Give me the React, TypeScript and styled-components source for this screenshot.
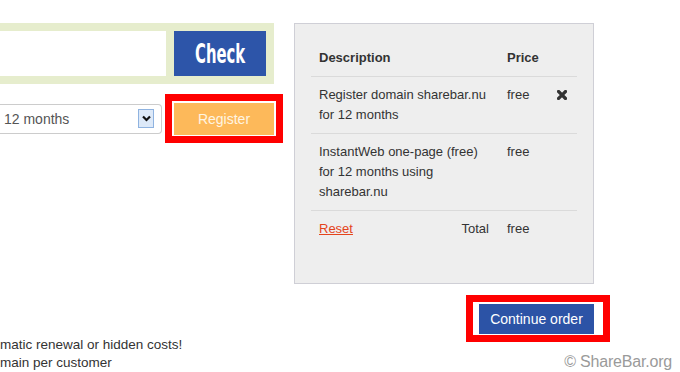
import styled, { createGlobalStyle } from "styled-components";

const GlobalStyle = createGlobalStyle`
  html, body {
    margin: 0;
    padding: 0;
    background: #fff;
  }
  body {
    font-family: "Liberation Sans", Arial, sans-serif;
    font-size: 13px;
    color: #333;
  }
`;

const Page = styled.div`
  position: relative;
  display: flex;
  gap: 20px;
  height: 372px;
  overflow: hidden;
`;

const LeftColumn = styled.div`
  width: 274px;
  flex-shrink: 0;
  display: flex;
  flex-direction: column;
  padding-top: 23px;
  box-sizing: border-box;
`;

const SearchBar = styled.div`
  display: flex;
  gap: 8px;
  height: 61px;
  padding: 8px 8px 8px 0;
  box-sizing: border-box;
  background: #e6edcd;
`;

const DomainInput = styled.input`
  width: 166px;
  height: 45px;
  border: 0;
  outline: none;
  background: #fff;
  padding: 0;
`;

const CheckButton = styled.button`
  width: 92px;
  height: 45px;
  border: 0;
  padding: 0;
  background: #2d55a9;
  color: #fff;
  font-family: "DejaVu Sans Condensed", "Liberation Sans", sans-serif;
  font-weight: bold;
  font-size: 27px;
  cursor: pointer;
`;

const CheckLabel = styled.span`
  display: inline-block;
  transform: scaleX(0.61);
`;

const OrderRow = styled.div`
  display: flex;
  align-items: center;
  gap: 3px;
  margin-top: 10px;
`;

const Select = styled.div`
  width: 162px;
  height: 30px;
  flex-shrink: 0;
  box-sizing: border-box;
  display: flex;
  align-items: center;
  justify-content: space-between;
  padding: 0 7px 0 4px;
  border: 1px solid #ccc;
  border-left: none;
  border-radius: 0 4px 4px 0;
  font-size: 14px;
  color: #555;
`;

const ArrowBox = styled.div`
  width: 16px;
  height: 19px;
  box-sizing: border-box;
  display: flex;
  align-items: center;
  justify-content: center;
  background: #dde9f8;
  border: 1px solid #8fb3e0;
`;

const Highlight = styled.div<{ $pad: string }>`
  display: flex;
  flex-shrink: 0;
  border: 7px solid #ff0000;
  background: #fff;
  padding: ${(p) => p.$pad};
`;

const RegisterButton = styled.button`
  width: 100px;
  height: 32px;
  border: 0;
  padding: 0;
  background: #fdb95a;
  color: #fff5e2;
  font-family: "Liberation Sans", Arial, sans-serif;
  font-size: 14px;
`;

const Notes = styled.div`
  margin-top: auto;
  font-size: 13.5px;
  line-height: 18px;
  color: #333;
`;

const RightColumn = styled.div`
  width: 300px;
  flex-shrink: 0;
  display: flex;
  flex-direction: column;
  padding-top: 23px;
  box-sizing: border-box;
`;

const Panel = styled.div`
  height: 261px;
  box-sizing: border-box;
  padding: 16px;
  background: #eee;
  border: 1px solid #cfcfd6;
`;

const Table = styled.table`
  width: 100%;
  border-collapse: collapse;
  table-layout: fixed;
`;

const Row = styled.tr<{ $last?: boolean }>`
  border-bottom: ${(p) => (p.$last ? "none" : "1px solid #dadada")};
`;

const Head = styled.th`
  padding: 8px;
  line-height: 20px;
  text-align: left;
  font-size: 13px;
  font-weight: bold;
  color: #333;
`;

const Cell = styled.td`
  padding: 8px;
  line-height: 20px;
  vertical-align: top;
  font-size: 13px;
  color: #333;
`;

const TotalLine = styled.div`
  display: flex;
  justify-content: space-between;
  padding-right: 2px;
`;

const ResetLink = styled.a`
  color: #e4441c;
  text-decoration: underline;
  cursor: pointer;
`;

const RemoveIcon = styled.svg`
  display: block;
  margin: 5px auto 0;
`;

const ContinueRow = styled.div`
  display: flex;
  justify-content: flex-end;
  margin-top: 11px;
  margin-right: -16px;
`;

const ContinueButton = styled.button`
  width: 115px;
  height: 30px;
  border: 0;
  padding: 0;
  background: #2c53a6;
  color: #fff;
  font-family: "Liberation Sans", Arial, sans-serif;
  font-size: 14px;
`;

const Watermark = styled.div`
  position: absolute;
  right: 8px;
  bottom: 1px;
  font-size: 16px;
  line-height: 18px;
  letter-spacing: -0.2px;
  color: #9a9a9a;
`;

export default function App() {
  return (
    <Page>
      <GlobalStyle />
      <LeftColumn>
        <SearchBar>
          <DomainInput />
          <CheckButton>
            <CheckLabel>Check</CheckLabel>
          </CheckButton>
        </SearchBar>
        <OrderRow>
          <Select>
            <span>12 months</span>
            <ArrowBox>
              <svg width="9" height="7" viewBox="0 0 9 7">
                <path d="M1 1.5 L4.5 5 L8 1.5" fill="none" stroke="#111" strokeWidth="2.2" />
              </svg>
            </ArrowBox>
          </Select>
          <Highlight $pad="2px 2px 1px 2px">
            <RegisterButton>Register</RegisterButton>
          </Highlight>
        </OrderRow>
        <Notes>
          <div>matic renewal or hidden costs!</div>
          <div>main per customer</div>
        </Notes>
      </LeftColumn>

      <RightColumn>
        <Panel>
          <Table>
            <colgroup>
              <col style={{ width: 188 }} />
              <col style={{ width: 48 }} />
              <col style={{ width: 30 }} />
            </colgroup>
            <thead>
              <Row>
                <Head>Description</Head>
                <Head>Price</Head>
                <Head />
              </Row>
            </thead>
            <tbody>
              <Row>
                <Cell>Register domain sharebar.nu for 12 months</Cell>
                <Cell>free</Cell>
                <Cell>
                  <RemoveIcon width="10" height="10" viewBox="0 0 10 10">
                    <path d="M1.5 1.5 L8.5 8.5 M8.5 1.5 L1.5 8.5" stroke="#333" strokeWidth="3.2" strokeLinecap="square" />
                  </RemoveIcon>
                </Cell>
              </Row>
              <Row>
                <Cell>InstantWeb one-page (free) for 12 months using sharebar.nu</Cell>
                <Cell>free</Cell>
                <Cell />
              </Row>
              <Row $last>
                <Cell>
                  <TotalLine>
                    <ResetLink>Reset</ResetLink>
                    <span>Total</span>
                  </TotalLine>
                </Cell>
                <Cell>free</Cell>
                <Cell />
              </Row>
            </tbody>
          </Table>
        </Panel>
        <ContinueRow>
          <Highlight $pad="2px 9px 1px 6px">
            <ContinueButton>Continue order</ContinueButton>
          </Highlight>
        </ContinueRow>
      </RightColumn>

      <Watermark>© ShareBar.org</Watermark>
    </Page>
  );
}
